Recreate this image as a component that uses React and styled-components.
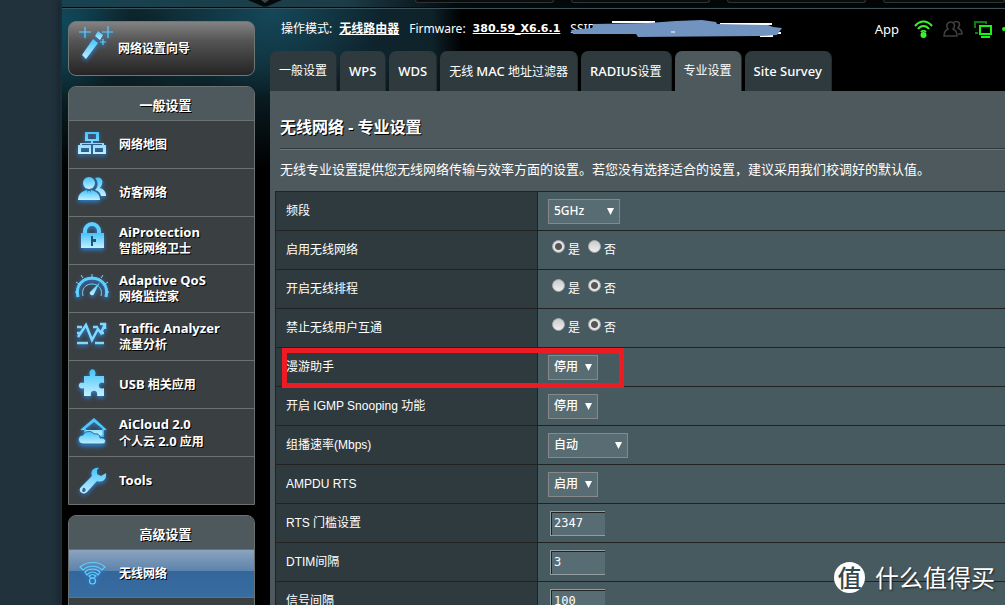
import styled, { createGlobalStyle, css } from 'styled-components';

const GlobalStyle = createGlobalStyle`
    * {
        box-sizing: border-box;
    }

    body {
        margin: 0;
        overflow: hidden;
        background: #21323d;
        color: #fff;
        font: 12px/16px "Noto Sans", "Noto Sans CJK SC", sans-serif;
    }
`;

const Page = styled.div`
    height: 100vh;
    margin-left: 60px;
    border-left: 2px solid #1d2c36;
    box-shadow: -3px 0 4px #1a2831;
    overflow: hidden;
    position: relative;
    background:
        radial-gradient(ellipse 70px 80px at 0 20px, #10485a, transparent),
        radial-gradient(ellipse 110px 90px at 210px 10px, #15485a, transparent),
        radial-gradient(ellipse 60px 60px at 60px 50px, #0b161c, transparent),
        linear-gradient(transparent 60px, #000 170px),
        linear-gradient(90deg, #0e3039, #0e222a 370px, #000 400px);
`;

const TopBar = styled.div`
    height: 9px;
    display: flex;
    justify-content: flex-end;
    gap: 17px;
    border-bottom: 1px solid #3d535c;
    box-shadow: inset 0 -1px 0 #050a0c;
    background: linear-gradient(90deg, #17424f, #1c3d48 30%, #04090b 42%, #020303);
`;

const Notch = styled.svg`
    width: 34px;
    height: 7px;
    margin-right: 116px;
`;

const TopButton = styled.div`
    width: ${({ $width }) => $width}px;
    height: 3px;
    border: 1px solid #2c3436;
    border-top: 0;
    border-radius: 0 0 5px 5px;
    background: #0a0d0e;
`;

const Columns = styled.div`
    display: grid;
    grid-template-columns: 187px minmax(0, 1fr);
    gap: 15px;
    padding-left: 6px;
`;

const Sidebar = styled.nav`
    display: flex;
    flex-direction: column;
    gap: 10px;
    padding-top: 12px;
`;

const linkText = css`
    display: grid;
    align-items: center;
    color: #fff;
    text-decoration: none;
    font-weight: bold;
    line-height: 16px;
    text-shadow: 1px 1px 0 #000;

    svg {
        align-self: start;
        margin-top: 5px;
    }
`;

const Wizard = styled.a`
    ${linkText}
    grid-template-columns: 34px 1fr;
    gap: 6px;
    height: 55px;
    padding-left: 9px;
    border: 1px solid #6f7677;
    border-radius: 8px;
    background: linear-gradient(#838383, #555 35%, #242424);
`;

const MenuGroup = styled.div`
    border: 1px solid #6b7071;
    border-radius: 8px 8px 0 0;
    overflow: hidden;
    background: #3a3f42;
`;

const MenuTitle = styled.h2`
    margin: 0;
    height: 33px;
    background: #4d595d;
    font-size: 13px;
    line-height: 36px;
    text-align: center;
    text-indent: 8px;
    text-shadow: 1px 1px 0 #000;
`;

const MenuItem = styled.a`
    ${linkText}
    grid-template-columns: 34px 1fr;
    gap: 10px;
    height: 48px;
    padding-left: 6px;
    border-top: 1px solid #6b7071;
    ${({ $active }) => $active && 'background: linear-gradient(#8ba3bf, #5c83ab 45%, #33669a 45%, #386da2);'}
`;

const Glyph = styled.svg`
    width: 34px;
    height: 34px;
    overflow: visible;
    filter: drop-shadow(0 2px 2px #2c7fd2);
`;

const Latin = styled.span`
    font-size: 13px;
`;

const Main = styled.main`
    padding-top: 9px;
    min-width: 0;
`;

const InfoBar = styled.div`
    display: flex;
    align-items: center;
    height: 22px;
    padding-left: 11px;
    white-space: nowrap;
`;

const InfoLink = styled.a`
    margin: 0 10px 0 7px;
    color: #fff;
    font-weight: bold;
`;

const Version = styled(InfoLink)`
    font-family: "DejaVu Sans", sans-serif;
    font-size: 11px;
`;

const Ssid = styled.span`
    position: relative;
    flex: 1;
`;

const Scribble = styled.svg`
    position: absolute;
    left: 0;
    top: -2px;
    width: 214px;
    height: 20px;
`;

const Status = styled.div`
    display: flex;
    align-items: center;
    gap: 15px;
    height: 24px;
    font-size: 13px;
`;

const Tabs = styled.div`
    display: flex;
    gap: 3px;
    padding-top: 11px;
`;

const Tab = styled.a`
    height: 40px;
    padding: 0 9px;
    border-right: 1px solid #222c30;
    border-radius: 7px 7px 0 0;
    background: ${({ $active }) => ($active ? '#4d595d' : '#2f3a3e')};
    color: #fff;
    text-decoration: none;
    white-space: nowrap;
    line-height: 40px;

    ${Latin} {
        font-weight: 500;
    }
`;

const Panel = styled.section`
    background: #4d595d;
    padding: 25px 0 0 5px;
`;

const Heading = styled.h1`
    margin: 0 0 0 5px;
    padding-bottom: 10px;
    border-bottom: 1px solid #2f3a3e;
    box-shadow: 0 1px 0 #667881;
    font-size: 16px;
    line-height: 22px;
    text-shadow: 1px 1px 0 #000;
`;

const Intro = styled.p`
    margin: 11px 5px 13px;
    font-size: 13px;
    line-height: 18px;
    white-space: nowrap;
`;

const Settings = styled.table`
    width: 100%;
    table-layout: fixed;
    border-collapse: collapse;
    font-family: "Liberation Sans", "Noto Sans CJK SC", sans-serif;

    th,
    td {
        height: 39px;
        padding: 0 10px;
        border: 1px solid #222;
        text-align: left;
    }

    th {
        width: 262px;
        background: #2f3a3e;
        font-weight: normal;
    }

    td {
        border-right: 0;
        background: #475a5f;
    }
`;

const Highlighted = styled.tr`
    position: relative;
`;

const Marker = styled.span`
    position: absolute;
    left: 6px;
    top: 0;
    width: 342px;
    height: 40px;
    border: 5px solid #ed1c24;
    pointer-events: none;
`;

const SelectBox = styled.span`
    display: inline-grid;
    align-items: center;
    width: ${({ $width }) => $width}px;
    vertical-align: middle;

    > * {
        grid-area: 1 / 1;
    }

    svg {
        justify-self: end;
        margin-right: 6px;
        pointer-events: none;
    }
`;

const Select = styled.select`
    appearance: none;
    width: 100%;
    height: 25px;
    padding: 0 5px;
    border: 1px solid #888;
    border-radius: 0;
    background: #576d73;
    color: #fff;
    font: 500 12px/20px "Noto Sans", "Noto Sans CJK SC", sans-serif;
`;

const TextInput = styled.input`
    display: block;
    width: 55px;
    height: 25px;
    margin-left: 2px;
    padding: 0 3px;
    border: 1px solid #929ea1;
    border-right: 0;
    background: #576d73;
    box-shadow: inset 1px 1px 0 #222;
    color: #fff;
    font: 12px "DejaVu Sans Mono", monospace;
`;

const Choices = styled.div`
    display: flex;
    gap: 6px;
    padding-left: 4px;
`;

const Choice = styled.label`
    display: flex;
    gap: 3px;
    width: 30px;
    line-height: 20px;
`;

const Radio = styled.input`
    appearance: none;
    width: 13px;
    height: 13px;
    margin: 0;
    border: 1px solid #a0a5a7;
    border-radius: 50%;
    background: linear-gradient(#ccc, #eee);

    &:checked {
        background: radial-gradient(circle, #555 0 3px, #e4e4e4 4px);
    }
`;

const Watermark = styled.div`
    position: absolute;
    right: 10px;
    bottom: 11px;
    display: flex;
    align-items: center;
    gap: 10px;
    font: 24px/34px "Noto Sans CJK SC", sans-serif;
    text-shadow: 1px 1px 2px #222;
`;

const WatermarkBadge = styled.span`
    width: 31px;
    height: 31px;
    border-radius: 50%;
    background: #fff;
    color: #33464b;
    font-weight: 500;
    line-height: 30px;
    text-align: center;
    text-shadow: none;
`;

const ICONS = {
    wand: (
        <>
            <path d="M4 28 15 12l5 4L8 32z" />
            <path d="m17 9 3-5 5 4-3 5z" />
            <path d="M7 0v11M1 5h12M30-1v12M24 5h11M25 12v6M22 15h6" fill="none" stroke="#5ecfff" strokeWidth="1.2" />
        </>
    ),
    map: (
        <path
            fillRule="evenodd"
            d="M10 6h14v9h-6v2h11v2h2v9H18v-9h9v-1H7v1h9v9H3v-9h2v-2h11v-2h-6zM13 8v5h8V8zM6 22v4h8v-4zM20 22v4h8v-4z"
        />
    ),
    guests: (
        <>
            <path d="M20 4c5-2 9 2 7 6 0 2-2 3-2 4 4 1 6 4 6 8h-5c-1-4-3-5-6-6 3-3 4-8 0-12z" />
            <circle cx="14" cy="9" r="6" />
            <path d="M3 26c0-6 4-9 9-10l2 8 2-8c5 1 9 4 9 10z" />
            <path d="m13 17-1 3 2 5 2-5-1-3z" />
        </>
    ),
    lock: (
        <>
            <path d="M10 13V9a7 7 0 0 1 14 0v4" fill="none" stroke="#5ecfff" strokeWidth="4" />
            <path d="M6 11h23v15H6z" />
            <path d="M16 14h2v3h3v3h-3v4h-2z" fill="#24547b" />
        </>
    ),
    gauge: (
        <>
            <path d="M3 27c-6-25 34-25 28 0" fill="none" stroke="#5ecfff" strokeWidth="3" />
            <path d="M8 26c-4-16 22-16 18 0M17 8V4M4 14l-3-2m29 2 3-2M8 8 6 5m20 3 2-3M0 22h3m28 0h3" fill="none" stroke="#7dd9ff" />
            <path d="m25 12-6 12a2 2 0 1 1-4-2z" />
        </>
    ),
    traffic: (
        <path
            d="M3 19 11 7l6 15 6-11 3 4 4-9M2 9h5m11 0h5M2 15h3m20 0h4M2 25h11m7 0h9M25 6h5v5"
            fill="none"
            stroke="#7dd9ff"
            strokeWidth="2.5"
        />
    ),
    puzzle: (
        <path d="M9 10h6c-3-9 8-9 5 0h9v7c-7-3-7 8 0 5v8h-7c2-7-8-7-6 0H9v-8c-7 3-7-8 0-5z" />
    ),
    cloud: (
        <>
            <path d="M6 16 19 5l12 11M10 14v8h18v-8L19 7z" stroke="#4fc8fb" strokeWidth="1.6" />
            <path d="M8 30c-6 0-6-9 0-9 2-5 10-4 11-1 5-1 6 2 6 4 7-1 7 6 2 6z" stroke="#276b96" />
        </>
    ),
    wrench: (
        <path
            fillRule="evenodd"
            d="M24 6c-5-1-9 3-7 8L6 25c-4 4 2 9 6 5l10-11c6 2 10-2 9-8l-5 3-4-2 0-4zM8 26a2 2 0 1 1-1 3z"
        />
    ),
    wifi: (
        <g fill="none" stroke="#63cefa" strokeWidth="1.2">
            <path d="M5 12c7-6 19-6 25 0l-3 3c-5-5-14-5-19 0zM10 17c4-4 11-4 15 0l-2 3c-3-4-8-4-11 0zM14 21c2-2 5-2 7 0l-2 2h-3z" />
            <circle cx="17.500" cy="26" r="3" />
        </g>
    ),
};

function Icon({ name }) {
    return (
        <Glyph viewBox="0 0 34 34" fill="url(#ice)" aria-hidden="true">
            <defs>
                <linearGradient id="ice" x2="0" y2="1">
                    <stop stopColor="#43c3fb" />
                    <stop offset="1" stopColor="#c4f0ff" />
                </linearGradient>
            </defs>
            {ICONS[name]}
        </Glyph>
    );
}

// Latin runs are set one pixel larger than the Chinese around them
function Mixed({ text }) {
    return text
        .split(/([\w.]+(?: [\w.]+)*)/)
        .map((part, i) => (i % 2 ? <Latin key={i}>{part}</Latin> : part));
}

const GENERAL = [
    { icon: 'map', lines: ['网络地图'] },
    { icon: 'guests', lines: ['访客网络'] },
    { icon: 'lock', lines: ['AiProtection', '智能网络卫士'] },
    { icon: 'gauge', lines: ['Adaptive QoS', '网络监控家'] },
    { icon: 'traffic', lines: ['Traffic Analyzer', '流量分析'] },
    { icon: 'puzzle', lines: ['USB 相关应用'] },
    { icon: 'cloud', lines: ['AiCloud 2.0', '个人云 2.0 应用'] },
    { icon: 'wrench', lines: ['Tools'] },
];

const TABS = ['一般设置', 'WPS', 'WDS', '无线 MAC 地址过滤器', 'RADIUS设置', '专业设置', 'Site Survey'];

const ROWS = [
    { id: 'band', label: '频段', select: '5GHz', width: 72 },
    { id: 'radio', label: '启用无线网络', choice: '是' },
    { id: 'schedule', label: '开启无线排程', choice: '否' },
    { id: 'isolate', label: '禁止无线用户互通', choice: '否' },
    { id: 'roaming', label: '漫游助手', select: '停用', width: 50, marked: true },
    { id: 'igmp', label: '开启 IGMP Snooping 功能', select: '停用', width: 50 },
    { id: 'multicast', label: '组播速率(Mbps)', select: '自动', width: 80 },
    { id: 'ampdu', label: 'AMPDU RTS', select: '启用', width: 50 },
    { id: 'rts', label: 'RTS 门槛设置', text: '2347' },
    { id: 'dtim', label: 'DTIM间隔', text: '3' },
    { id: 'beacon', label: '信号间隔', text: '100' },
];

function Field({ row }) {
    if (row.select) {
        return (
            <SelectBox $width={row.width}>
                <Select id={row.id}>
                    <option>{row.select}</option>
                </Select>
                <svg width="7" height="7" viewBox="0 0 7 7" aria-hidden="true">
                    <path d="M0 0h7L3.5 7z" fill="#fff" />
                </svg>
            </SelectBox>
        );
    }
    if (row.choice) {
        return (
            <Choices>
                {['是', '否'].map((option) => (
                    <Choice key={option}>
                        <Radio type="radio" name={row.id} defaultChecked={option === row.choice} />
                        {option}
                    </Choice>
                ))}
            </Choices>
        );
    }
    return <TextInput id={row.id} defaultValue={row.text} />;
}

function SettingRow({ row }) {
    const Row = row.marked ? Highlighted : 'tr';
    return (
        <Row>
            <th scope="row">
                {row.choice ? row.label : <label htmlFor={row.id}>{row.label}</label>}
            </th>
            <td>
                <Field row={row} />
                {row.marked && <Marker />}
            </td>
        </Row>
    );
}

function StatusIcons() {
    return (
        <svg width="91" height="22" viewBox="0 0 91 22" fill="none" aria-hidden="true">
            <g stroke="#39f52f" strokeWidth="2">
                <path d="M1 8c5-6 12-6 17 0M4 11c3-4 8-4 11 0M7 14c2-2 3-2 5 0" />
                <circle cx="9.500" cy="17" r="2" fill="#19ff19" />
            </g>
            <g stroke="#404040" strokeWidth="1.500">
                <path d="M30 18c0-4 2-6 4-7-3-4 0-7 3-7s5 4 2 7c3 1 4 3 4 7z" />
                <path d="M40 4c5-2 7 2 4 6 2 1 4 3 4 6h-4" />
            </g>
            <path d="M61 10V4h11v2M61 15h3" stroke="#087f08" strokeWidth="2" />
            <path d="M66 8h11v8H66zM67 19h9" stroke="#17f517" strokeWidth="2" />
            <circle cx="90" cy="11" r="2" fill="#17f517" />
        </svg>
    );
}

export default function App() {
    return (
        <>
            <GlobalStyle />
            <Page>
                <TopBar>
                    <Notch viewBox="0 0 34 7" aria-hidden="true">
                        <path d="M0 0h34L20 6q-3 1-6 0z" fill="#06090a" />
                        <path d="M13 0h8l-4 3z" fill="#3b4548" />
                    </Notch>
                    <TopButton $width={139} />
                    <TopButton $width={139} />
                    <TopButton $width={139} />
                    <TopButton $width={122} />
                </TopBar>
                <Columns>
                    <Sidebar>
                        <Wizard href="#wizard">
                            <Icon name="wand" />
                            网络设置向导
                        </Wizard>
                        <MenuGroup>
                            <MenuTitle>一般设置</MenuTitle>
                            {GENERAL.map(({ icon, lines }) => (
                                <MenuItem key={icon} href={`#${icon}`}>
                                    <Icon name={icon} />
                                    <span>
                                        {lines.map((line) => (
                                            <div key={line}>
                                                <Mixed text={line} />
                                            </div>
                                        ))}
                                    </span>
                                </MenuItem>
                            ))}
                        </MenuGroup>
                        <MenuGroup>
                            <MenuTitle>高级设置</MenuTitle>
                            <MenuItem href="#wireless" $active>
                                <Icon name="wifi" />
                                无线网络
                            </MenuItem>
                            <MenuItem href="#lan" />
                        </MenuGroup>
                    </Sidebar>
                    <Main>
                        <InfoBar>
                            操作模式:
                            <InfoLink href="#mode">无线路由器</InfoLink>
                            Firmware:
                            <Version href="#firmware">380.59_X6.6.1</Version>
                            <Ssid>
                                SSID:
                                <Scribble viewBox="0 0 214 20" aria-hidden="true">
                                    <path d="M42 3h43M150 5h52M202 14h9M190 17h13" stroke="#fff" strokeWidth="2" />
                                    <path
                                        d="M1 11 22 9 24 5 78 4 106 2 132 1 146 3 147 5 198 6 203 8 212 9 207 16 190 17 68 18 66 15 3 15z"
                                        fill="#7093c0"
                                    />
                                    <path d="M101 13h4" stroke="#fff" />
                                </Scribble>
                            </Ssid>
                            <Status>
                                App
                                <StatusIcons />
                            </Status>
                        </InfoBar>
                        <Tabs>
                            {TABS.map((name) => (
                                <Tab key={name} href="#tab" $active={name === '专业设置'}>
                                    <Mixed text={name} />
                                </Tab>
                            ))}
                        </Tabs>
                        <Panel>
                            <Heading>无线网络 - 专业设置</Heading>
                            <Intro>
                                无线专业设置提供您无线网络传输与效率方面的设置。若您没有选择适合的设置，建议采用我们校调好的默认值。
                            </Intro>
                            <Settings>
                                <tbody>
                                    {ROWS.map((row) => (
                                        <SettingRow key={row.id} row={row} />
                                    ))}
                                </tbody>
                            </Settings>
                        </Panel>
                    </Main>
                </Columns>
                <Watermark>
                    <WatermarkBadge>值</WatermarkBadge>
                    什么值得买
                </Watermark>
            </Page>
        </>
    );
}
